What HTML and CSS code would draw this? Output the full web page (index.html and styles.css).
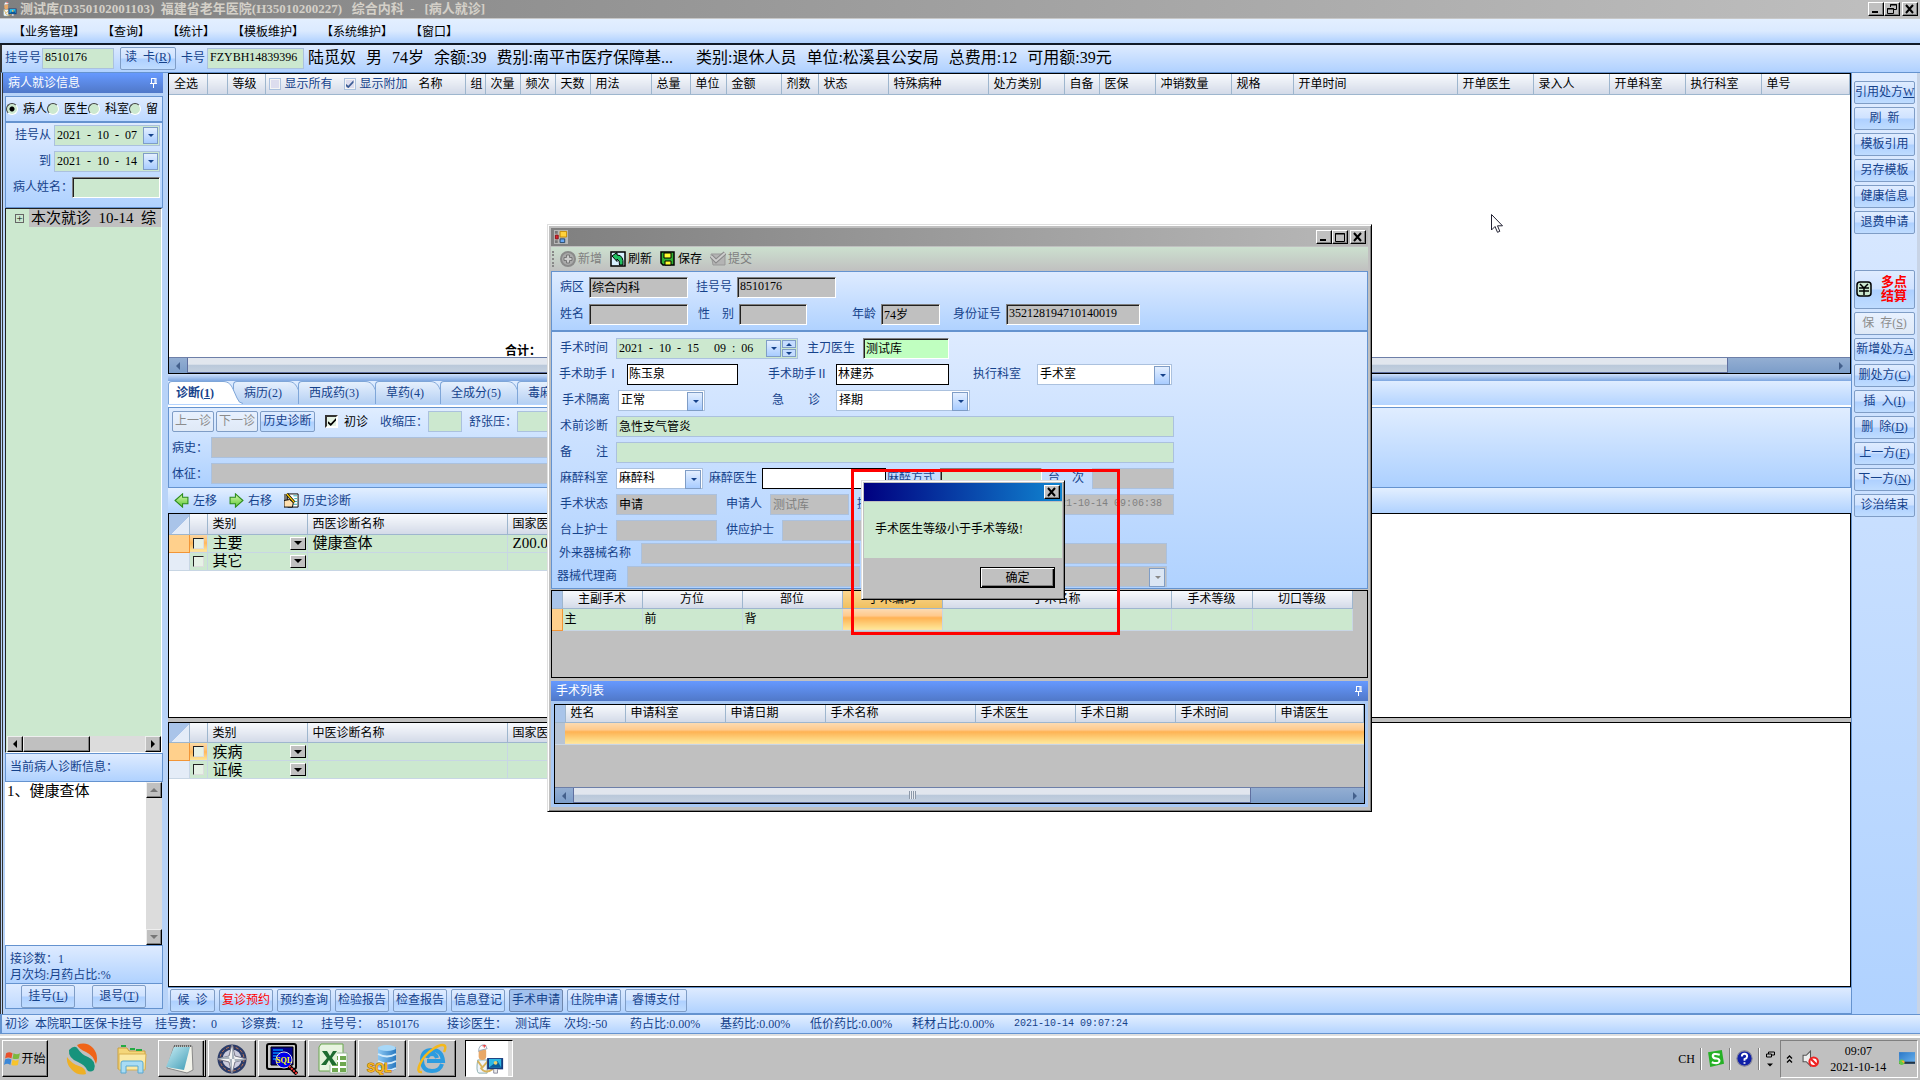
FILE: index.html
```html
<!DOCTYPE html>
<html lang="zh-CN">
<head>
  <meta charset="UTF-8">
  <meta name="viewport" content="width=device-width, initial-scale=1.0">
  <title>病人就诊</title>
  <link rel="stylesheet" href="styles.css">
</head>
<body>
  <svg class="defs" aria-hidden="true">
    <defs>
      <linearGradient id="tabFill" x1="0" y1="0" x2="0" y2="1"><stop offset="0" stop-color="#e6f0fd"/><stop offset="1" stop-color="#b5d0f3"/></linearGradient>
      <linearGradient id="arrowFill" x1="0" y1="0" x2="0" y2="1"><stop offset="0" stop-color="#d8f8b0"/><stop offset="1" stop-color="#5cc832"/></linearGradient>
      <linearGradient id="deskFill" x1="0" y1="0" x2="1" y2="1"><stop offset="0" stop-color="#2a78c8"/><stop offset="1" stop-color="#6db4ee"/></linearGradient>
      <linearGradient id="padFill" x1="0" y1="0" x2="1" y2="1"><stop offset="0" stop-color="#c9eef5"/><stop offset="1" stop-color="#3f9bb5"/></linearGradient>
      <linearGradient id="dbFill" x1="0" y1="0" x2="1" y2="0"><stop offset="0" stop-color="#8cc8f4"/><stop offset="1" stop-color="#2878c0"/></linearGradient>
    </defs>
    <symbol id="pin" viewBox="0 0 9 12"><path d="M2.5 1v5M1 6.500h7M6 1v5M7 1v5M2.500 1.500h4M4.500 7v4" stroke="#fff" fill="none"/></symbol>
    <symbol id="doctor" viewBox="0 0 32 34">
      <path d="M4 18Q2 30 5 32H14V18Z" fill="#eef4fb" stroke="#8aa"/><rect x="5" y="5" width="8" height="13" rx="4" fill="#e8a868"/><path d="M5 9Q5 1 12 2L14 6 6 8Z" fill="#fff" stroke="#9ab"/><path d="M9 3h4M11 2v3" stroke="#e33"/><path d="M4 19L9 26 15 19M7 26Q12 34 21 27T25 20" fill="none" stroke="#d8b35c" stroke-width="2"/>
      <rect x="14" y="16" width="17" height="12" fill="#173a7c"/><rect x="16" y="17" width="13" height="9" fill="#2cb7e4"/><path d="M16 26L25 19 29 26Z" fill="#0a5d9c"/><circle cx="23" cy="21" r="2" fill="#e9cf6d"/><path d="M21 28v4h4v-4" stroke="#889" fill="#eee"/>
    </symbol>
    <symbol id="win-min" viewBox="0 0 12 10"><path d="M2 8h6" stroke="#000" stroke-width="2"/></symbol>
    <symbol id="win-max" viewBox="0 0 12 10"><path d="M1.500 1.500h9v8h-9zM1 2h10" stroke="#000" fill="none"/></symbol>
    <symbol id="win-restore" viewBox="0 0 12 10"><path d="M4.500 3V.5h6v5H8M4 1h7M1.500 4.500h6v5h-6zM1 5h7" stroke="#000" fill="none"/></symbol>
    <symbol id="win-close" viewBox="0 0 12 10"><path d="M2 1L9 9M9 1L2 9" stroke="#000" stroke-width="2"/></symbol>
    <symbol id="left" viewBox="0 0 14 14"><path d="M1 7L8 .8V4H13V10H8V13.200Z" fill="url(#arrowFill)" stroke="#2c8c1c"/></symbol>
    <symbol id="right" viewBox="0 0 14 14"><path d="M13 7L6 .8V4H1V10H6V13.200Z" fill="url(#arrowFill)" stroke="#2c8c1c"/></symbol>
    <symbol id="cap" viewBox="0 0 20 23"><path class="cap-fill" d="M0 .5C6 .5 8 4 10 8L14 17Q16 22.500 20 22.500V23H0Z"/><path d="M0 .5C6 .5 8 4 10 8L14 17Q16 22.500 20 22.500" fill="none" stroke="#7fa6d8"/></symbol>
  </svg>

  <header class="titlebar">
    <svg class="app-icon"><use href="#doctor"/></svg>
    <h1>测试库(D350102001103)&nbsp; 福建省老年医院(H35010200227)&nbsp;&nbsp; 综合内科&nbsp; -&nbsp;&nbsp; [病人就诊]</h1>
    <div class="win-buttons">
      <button aria-label="最小化"><svg><use href="#win-min"/></svg></button><button aria-label="还原"><svg><use href="#win-restore"/></svg></button><button aria-label="关闭"><svg><use href="#win-close"/></svg></button>
    </div>
  </header>

  <nav class="menu">
    <a href="#">【业务管理】</a><a href="#">【查询】</a><a href="#">【统计】</a><a href="#">【模板维护】</a><a href="#">【系统维护】</a><a href="#">【窗口】</a>
  </nav>

  <section class="patient-bar">
    <label for="regNo">挂号号</label>
    <input id="regNo" class="reg" value="8510176">
    <button class="btn">读&nbsp; 卡(<u>R</u>)</button>
    <label for="cardNo">卡号</label>
    <input id="cardNo" class="card" value="FZYBH14839396">
    <div class="patient">
      <span>陆觅奴</span><span>男</span><span>74岁</span><span>余额:39</span><span class="fee">费别:南平市医疗保障基...</span><span>类别:退休人员</span><span>单位:松溪县公安局</span><span>总费用:12</span><span>可用额:39元</span>
    </div>
  </section>

  <main class="workspace">
    <aside class="left">
      <h2 class="blue-title">病人就诊信息<svg class="pin"><use href="#pin"/></svg></h2>
      <div class="radios">
        <label><input type="radio" name="scope" checked>病人</label><label><input type="radio" name="scope">医生</label><label><input type="radio" name="scope">科室</label><label><input type="radio" name="scope">留</label>
      </div>
      <div class="search">
        <label for="from">挂号从</label>
        <div class="date"><input id="from" value="2021&nbsp; -&nbsp; 10&nbsp; -&nbsp; 07"><button class="drop" aria-label="选择"></button></div>
        <label for="to">到</label>
        <div class="date"><input id="to" value="2021&nbsp; -&nbsp; 10&nbsp; -&nbsp; 14"><button class="drop" aria-label="选择"></button></div>
        <label for="pname">病人姓名：</label>
        <input id="pname" class="sunken">
      </div>
      <div class="tree">
        <div class="tree-item"><button class="plus" aria-label="展开">+</button><span>本次就诊&nbsp; 10-14&nbsp; 综</span></div>
        <div class="hscroll classic">
          <button aria-label="左"><i class="tri l"></i></button><div class="thumb"></div><button class="end" aria-label="右"><i class="tri r"></i></button>
        </div>
      </div>
      <h3 class="section">当前病人诊断信息：</h3>
      <div class="diag-list">
        <p>1、健康查体</p>
        <div class="vscroll classic"><button aria-label="上"><i class="tri u"></i></button><button aria-label="下"><i class="tri d"></i></button></div>
      </div>
      <div class="stats"><p>接诊数：1</p><p>月次均:月药占比:%</p></div>
      <div class="reg-buttons"><button class="btn">挂号(<u>L</u>)</button><button class="btn">退号(<u>T</u>)</button></div>
    </aside>

    <section class="center">
      <div class="orders">
        <table>
          <colgroup><col class="w38"><col class="w20"><col class="w38"><col class="w200"><col class="w20"><col class="w35"><col class="w35"><col class="w35"><col class="w61"><col class="w39"><col class="w36"><col class="w55"><col class="w37"><col class="w70"><col class="w100"><col class="w76"><col class="w35"><col class="w56"><col class="w76"><col class="w62"><col class="w164"><col class="w76"><col class="w76"><col class="w76"><col class="w76"><col></colgroup>
          <thead><tr>
            <th>全选</th><th></th><th>等级</th>
            <th class="name-col"><div class="toggles"><label><input type="checkbox">显示所有</label><label><input type="checkbox" checked>显示附加</label><span>名称</span></div></th>
            <th>组</th><th>次量</th><th>频次</th><th>天数</th><th>用法</th><th>总量</th><th>单位</th><th>金额</th><th>剂数</th><th>状态</th><th>特殊病种</th><th>处方类别</th><th>自备</th><th>医保</th><th>冲销数量</th><th>规格</th><th>开单时间</th><th>开单医生</th><th>录入人</th><th>开单科室</th><th>执行科室</th><th>单号</th>
          </tr></thead>
        </table>
        <p class="total">合计：</p>
        <div class="hscroll flat"><button aria-label="左"><i class="tri l"></i></button><div class="thumb"></div><button class="end" aria-label="右"><i class="tri r"></i></button></div>
      </div>
      <div class="splitter"></div>
      <div class="tabs">
        <button class="tab active">诊断(<u>1</u>)<svg class="cap"><use href="#cap"/></svg></button><button class="tab">病历(2)<svg class="cap"><use href="#cap"/></svg></button><button class="tab long">西成药(3)<svg class="cap"><use href="#cap"/></svg></button><button class="tab">草药(4)<svg class="cap"><use href="#cap"/></svg></button><button class="tab long">全成分(5)<svg class="cap"><use href="#cap"/></svg></button><button class="tab long">毒麻<svg class="cap"><use href="#cap"/></svg></button>
      </div>
      <div class="vitals">
        <div class="vitals-top">
          <button class="btn" disabled>上一诊</button><button class="btn" disabled>下一诊</button><button class="btn hist">历史诊断</button>
          <label class="first"><input type="checkbox" class="classic-check" checked>初诊</label>
          <label for="sbp">收缩压：</label><input id="sbp" class="bp">
          <label for="dbp">舒张压：</label><input id="dbp" class="bp">
        </div>
        <div class="vitals-row"><label for="history">病史：</label><input id="history" disabled></div>
        <div class="vitals-row"><label for="signs">体征：</label><input id="signs" disabled></div>
      </div>
      <div class="diag-tools">
        <button><svg><use href="#left"/></svg>左移</button>
        <button><svg><use href="#right"/></svg>右移</button>
        <button><svg viewBox="0 0 16 16"><path d="M0 1h15v14H0z" fill="#777"/><path d="M4 1h11v14H4z" fill="#fff" stroke="#000"/><path d="M10 3h4M11 6h3M11 9h3M10 12h4" stroke="#2aa"/><path d="M0 8l6-1 4 3-1 5H0z" fill="#ffe0b0" stroke="#000"/><path d="M3 1l8 9" stroke="#000" stroke-width="3"/><path d="M3 1l8 9" stroke="#fc0" stroke-width="1.500"/></svg>历史诊断</button>
      </div>
      <div class="grid-box west">
        <table class="diag">
          <colgroup><col class="w20"><col class="w18"><col class="w100"><col class="w200"><col></colgroup>
          <thead><tr><th class="corner"></th><th></th><th>类别</th><th>西医诊断名称</th><th>国家医</th></tr></thead>
          <tbody>
            <tr class="current"><td></td><td><input type="checkbox" aria-label="选择主要"></td><td><div class="pick">主要<button aria-label="选择"><i class="tri d"></i></button></div></td><td>健康查体</td><td>Z00.0</td></tr>
            <tr><td></td><td><input type="checkbox" aria-label="选择其它"></td><td><div class="pick">其它<button aria-label="选择"><i class="tri d"></i></button></div></td><td></td><td></td></tr>
          </tbody>
        </table>
      </div>
      <div class="grey-split"></div>
      <div class="grid-box tcm">
        <table class="diag">
          <colgroup><col class="w20"><col class="w18"><col class="w100"><col class="w200"><col></colgroup>
          <thead><tr><th class="corner"></th><th></th><th>类别</th><th>中医诊断名称</th><th>国家医</th></tr></thead>
          <tbody>
            <tr class="current"><td></td><td><input type="checkbox" aria-label="选择疾病"></td><td><div class="pick">疾病<button aria-label="选择"><i class="tri d"></i></button></div></td><td></td><td></td></tr>
            <tr><td></td><td><input type="checkbox" aria-label="选择证候"></td><td><div class="pick">证候<button aria-label="选择"><i class="tri d"></i></button></div></td><td></td><td></td></tr>
          </tbody>
        </table>
      </div>
      <div class="bottom-buttons">
        <button class="btn wait">候&nbsp; 诊</button><button class="btn red">复诊预约</button><button class="btn">预约查询</button><button class="btn">检验报告</button><button class="btn">检查报告</button><button class="btn">信息登记</button><button class="btn pressed">手术申请</button><button class="btn">住院申请</button><button class="btn pay">睿博支付</button>
      </div>
    </section>

    <aside class="right">
      <button class="btn">引用处方<u>W</u></button>
      <button class="btn">刷&nbsp; 新</button>
      <button class="btn">模板引用</button>
      <button class="btn">另存模板</button>
      <button class="btn">健康信息</button>
      <button class="btn">退费申请</button>
      <button class="btn settle"><svg viewBox="0 0 16 16"><rect x="1" y="1" width="14" height="14" rx="3" fill="#cce8cf" stroke="#000" stroke-width="1.500"/><path d="M4 3l4 4 4-4M3 7h10M3 10h10M8 7v7" stroke="#000" stroke-width="1.500" fill="none"/></svg><b>多点<br>结算</b></button>
      <button class="btn" disabled>保&nbsp; 存(<u>S</u>)</button>
      <button class="btn">新增处方<u>A</u></button>
      <button class="btn">删处方(<u>C</u>)</button>
      <button class="btn">插&nbsp; 入(<u>I</u>)</button>
      <button class="btn">删&nbsp; 除(<u>D</u>)</button>
      <button class="btn">上一方(<u>F</u>)</button>
      <button class="btn">下一方(<u>N</u>)</button>
      <button class="btn">诊治结束</button>
    </aside>
  </main>

  <footer class="status">
    <span class="s30">初诊</span><span class="s120">本院职工医保卡挂号</span><span class="s56">挂号费：</span><span class="s30">0</span><span class="s50">诊察费:</span><span class="s30">12</span><span class="s56">挂号号：</span><span class="s70">8510176</span><span class="s68">接诊医生：</span><span class="s49">测试库</span><span class="s66">次均:-50</span><span class="s90">药占比:0.00%</span><span class="s90">基药比:0.00%</span><span class="s102">低价药比:0.00%</span><span class="s102">耗材占比:0.00%</span><span class="mono">2021-10-14 09:07:24</span>
  </footer>

  <section class="window">
    <div class="window-title">
      <svg class="form-icon" viewBox="0 0 15 15"><path d="M0 0h15v15H0z" fill="#b8b8b8"/><path d="M1 1h3v3H1zM1 11h3v3H1z" fill="#777"/><path d="M6.500 1.500h7v6h-7z" fill="#ffd23c" stroke="#c68a00"/><path d="M1.500 5.500h3v4h-3z" fill="#d23" stroke="#811"/><path d="M6.500 9.500h5v4h-5z" fill="#68a8f4" stroke="#246"/></svg>
      <div class="win-buttons"><button aria-label="最小化"><svg><use href="#win-min"/></svg></button><button aria-label="最大化"><svg><use href="#win-max"/></svg></button><button aria-label="关闭"><svg><use href="#win-close"/></svg></button></div>
    </div>
    <div class="window-tools">
      <i class="grip"></i>
      <button disabled><svg viewBox="0 0 16 16"><circle cx="8" cy="8" r="7" fill="#aaa" stroke="#8a8a8a" stroke-width="2"/><path d="M6.500 4h3v2.500H12v3H9.500V12h-3V9.500H4v-3h2.500z" fill="#ccc" stroke="#777"/></svg>新增</button>
      <button><svg viewBox="0 0 16 16"><path d="M1 1h14v14H1z" fill="#d8f0ff" stroke="#000" stroke-width="1.500"/><path d="M2 5L7 1.500V4Q14 4 13 14H9.500Q10 9 7 8V10.500Z" fill="#1fc060" stroke="#000"/></svg>刷新</button>
      <button><svg viewBox="0 0 16 16"><path d="M1 1h13v13H3L1 12z" fill="#30b030" stroke="#000" stroke-width="1.500"/><path d="M4 2h7v5H4zM5 10h6v4H5z" fill="#ffff30" stroke="#000"/></svg>保存</button>
      <button disabled><svg viewBox="0 0 16 16"><path d="M1 3h14v11H3z" fill="#b4b4b4" stroke="#999"/><path d="M1 5l5 5 9-8" stroke="#888" stroke-width="4" fill="none"/><path d="M1 5l5 5 9-8" stroke="#ccc" stroke-width="2" fill="none"/></svg>提交</button>
    </div>

    <form class="who">
      <div class="row who-a">
        <label for="ward">病区</label><input id="ward" class="sunken grey" value="综合内科">
        <label for="rno">挂号号</label><input id="rno" class="sunken grey" value="8510176">
      </div>
      <div class="row who-b">
        <label for="nm">姓名</label><input id="nm" class="sunken grey">
        <label for="sex">性　别</label><input id="sex" class="sunken grey">
        <label for="age">年龄</label><input id="age" class="sunken grey" value="74岁">
        <label for="idno">身份证号</label><input id="idno" class="sunken grey" value="352128194710140019">
      </div>
    </form>

    <form class="surgery">
      <div class="row r-time">
        <label for="stime">手术时间</label>
        <div class="date"><input id="stime" value="2021&nbsp; -&nbsp; 10&nbsp; -&nbsp; 15&nbsp; &nbsp; &nbsp;09&nbsp; :&nbsp; 06"><button type="button" class="drop" aria-label="选择"></button><div class="spin"><button type="button" aria-label="加"><i class="tri u"></i></button><button type="button" aria-label="减"><i class="tri d"></i></button></div></div>
        <label for="surgeon">主刀医生</label><input id="surgeon" class="sunken lime" value="测试库">
      </div>
      <div class="row r-assist">
        <label for="a1">手术助手Ⅰ</label><input id="a1" class="plain" value="陈玉泉">
        <label for="a2">手术助手Ⅱ</label><input id="a2" class="plain" value="林建苏">
        <label for="dept" class="wide">执行科室</label><div class="select"><select id="dept"><option>手术室</option></select></div>
      </div>
      <div class="row r-iso">
        <label for="iso">手术隔离</label><div class="select"><select id="iso"><option>正常</option></select></div>
        <label for="urg" class="wide">急　　诊</label><div class="select"><select id="urg"><option>择期</option></select></div>
      </div>
      <div class="row r-full"><label for="pre">术前诊断</label><input id="pre" class="flatin" value="急性支气管炎"></div>
      <div class="row r-full"><label for="memo">备　　注</label><input id="memo" class="flatin"></div>
      <div class="row r-anes">
        <label for="an1">麻醉科室</label><div class="select"><select id="an1"><option>麻醉科</option></select></div>
        <label for="an2" class="snug">麻醉医生</label><input id="an2" class="plain">
        <label for="an3" class="snug">麻醉方式</label><input id="an3" class="sunken green">
        <label for="seq">台　次</label><input id="seq" disabled>
      </div>
      <div class="row r-state">
        <label for="st">手术状态</label><input id="st" class="flatin grey" value="申请">
        <label for="ap">申请人</label><input id="ap" disabled value="测试库">
        <label for="at" class="from-left">提交时间</label><input id="at" class="mono" disabled value="2021-10-14 09:06:38">
      </div>
      <div class="row r-nurse">
        <label for="n1">台上护士</label><input id="n1" disabled>
        <label for="n2">供应护士</label><input id="n2" disabled>
      </div>
      <div class="tight">
        <div class="row r-ext"><label for="e1">外来器械名称</label><input id="e1" disabled><input aria-label="器械" disabled></div>
        <div class="row r-agent"><label for="e2">器械代理商</label><input id="e2" disabled><div class="select off"><select aria-label="代理商" disabled><option></option></select></div></div>
      </div>
    </form>

    <div class="op-box">
      <table class="op">
        <colgroup><col class="w10"><col class="w80"><col class="w100"><col class="w100"><col class="w100"><col class="w229"><col class="w81"><col class="w100"></colgroup>
        <thead><tr><th class="sel"></th><th>主副手术</th><th>方位</th><th>部位</th><th class="hot">手术编码</th><th>手术名称</th><th>手术等级</th><th>切口等级</th></tr></thead>
        <tbody><tr><td class="sel"></td><td>主</td><td>前</td><td>背</td><td class="orange"></td><td></td><td></td><td></td></tr></tbody>
      </table>
    </div>
    <h2 class="blue-title">手术列表<svg class="pin"><use href="#pin"/></svg></h2>
    <div class="list-box">
      <table class="list">
        <colgroup><col class="w10"><col class="w60"><col class="w100"><col class="w100"><col class="w150"><col class="w100"><col class="w100"><col class="w100"><col></colgroup>
        <thead><tr><th class="sel"></th><th>姓名</th><th>申请科室</th><th>申请日期</th><th>手术名称</th><th>手术医生</th><th>手术日期</th><th>手术时间</th><th>申请医生</th></tr></thead>
        <tbody><tr><td class="sel"></td><td></td><td></td><td></td><td></td><td></td><td></td><td></td><td></td></tr></tbody>
      </table>
      <div class="hscroll flat"><button aria-label="左"><i class="tri l"></i></button><div class="thumb"><i></i></div><button class="end" aria-label="右"><i class="tri r"></i></button></div>
    </div>
  </section>

  <div class="mark"></div>

  <section class="alert" role="alertdialog">
    <div class="alert-title"><div class="win-buttons"><button aria-label="关闭"><svg><use href="#win-close"/></svg></button></div></div>
    <p>手术医生等级小于手术等级!</p>
    <div class="alert-foot"><button class="ok">确定</button></div>
  </section>

  <svg class="cursor" viewBox="0 0 12 19"><path d="M.5 .5V16L4 12.500 6.500 18.300 8.800 17.300 6.500 11.800H11.500Z" fill="#fff" stroke="#223"/></svg>

  <footer class="taskbar">
    <button class="start"><svg viewBox="0 0 16 16"><path d="M2 3Q5 1 8 3L7 8Q4 6 1 8Z" fill="#e8502c"/><path d="M9 3Q12 5 15 3L14 8Q11 9 8 8Z" fill="#7cb83c"/><path d="M1 9Q4 7 7 9L6 14Q3 12 0 14Z" fill="#3c88d8"/><path d="M8 9Q11 11 14 9L13 14Q10 15 7 14Z" fill="#f8c42c"/></svg>开始</button>
    <div class="quick">
      <svg viewBox="0 0 32 32"><path d="M11 2Q20-2 27 5 33 12 30 21 27 12 20 9 13 6 11 2Z" fill="#f06418"/><path d="M3 7Q9 1 12 6 15 11 22 14 31 18 28 27 24 30 21 27 19 22 12 19 2 15 3 7Z" fill="#16937c"/><path d="M1 14Q6 21 13 23 20 25 20 31 12 33 6 27 0 21 1 14Z" fill="#eeb026"/></svg>
      <svg viewBox="0 0 32 32"><path d="M2 5h9l2 3h16v18H2z" fill="#f4d67a" stroke="#c9a040"/><path d="M5 3h5M14 6h5M20 7h6" stroke="#2a4" stroke-width="2"/><path d="M3 11h27l-1 16H3z" fill="#fbe9a4" stroke="#d8b050"/><path d="M5 30V20Q5 18 7 18H25Q27 18 27 20V30H22V23H10V30Z" fill="#a8dcf4" stroke="#58a8d0"/></svg>
    </div>
    <div class="tasks">
      <button class="stack" aria-label="记事本"><svg viewBox="0 0 32 32"><path d="M9 3H27L28 27 22 30 2 25Z" fill="#f3f3ea" stroke="#888"/><path d="M9 4H25L19 27 1 24Z" fill="url(#padFill)"/><path d="M9 3h18" stroke="#666" stroke-width="2" stroke-dasharray="1 1"/></svg></button>
      <button aria-label="导航"><svg viewBox="0 0 32 32"><circle cx="16" cy="16" r="12" fill="#ccd" stroke="#2c3c68" stroke-width="5"/><circle cx="16" cy="16" r="12" fill="none" stroke="#c87850" stroke-width="1" stroke-dasharray="3 2"/><path d="M16 1L19 13 31 16 19 19 16 31 13 19 1 16 13 13Z" fill="#f4f4f4" stroke="#778"/><path d="M16 1V16H31L19 19ZM16 31V16H1L13 13Z" fill="#a9b2bd"/></svg></button>
      <button aria-label="SQL"><svg viewBox="0 0 32 32"><rect x="1" y="1" width="29" height="25" rx="2" fill="#c8c8c8" stroke="#000" stroke-width="2"/><path d="M5 4h22v18H5z" fill="#00008c" stroke="#000"/><path d="M7 7h10M7 10h7M7 13h6M7 16h5" stroke="#08f" stroke-width="1.500"/><circle cx="18" cy="17" r="8" fill="#00e" stroke="#ddd"/><text x="18" y="20" text-anchor="middle" class="lens">SQL</text><path d="M23 23l8 8" stroke="#000" stroke-width="4"/><path d="M23 23l8 8" stroke="#f33" stroke-width="2" stroke-dasharray="2 1"/></svg></button>
      <button aria-label="Excel"><svg viewBox="0 0 32 32"><path d="M5 1h22v27H3V4z" fill="#e8f4e0" stroke="#6aa84f"/><path d="M14 10h17v20H14z" fill="#fff" stroke="#9b9"/><path d="M16 13h6v4h-6zM24 13h6v4h-6zM16 19h6v4h-6zM24 19h6v4h-6zM16 25h6v4h-6zM24 25h6v4h-6z" fill="#6fa850"/><path d="M4 7h17v15H4z" fill="#e4f2da"/><path d="M6 8h5l3 5 3-5h4l-5 7 5 7h-5l-3-5-3 5H5l6-7z" fill="#1e6b30"/></svg></button>
      <button aria-label="SQL数据库"><svg viewBox="0 0 32 32"><path d="M12 4V26Q21 32 30 26V4Z" fill="url(#dbFill)"/><ellipse cx="21" cy="5" rx="9" ry="3" fill="#a8d8f8"/><path d="M12 11Q21 16 30 11M12 18Q21 23 30 18M12 25Q21 30 30 25" stroke="#d4ecfc" stroke-width="2" fill="none"/><text x="1" y="29" class="gold">SQL</text></svg></button>
      <button aria-label="浏览器"><svg viewBox="0 0 32 32"><path d="M26 21Q24 28 16 28 6 28 6 17 6 7 16 7 26 7 27 18H11M11 15Q12 11 16 11 20 11 21 15" fill="none" stroke="#2c9ce0" stroke-width="4"/><path d="M6 29Q0 30 4 21 8 12 17 6 26 0 29 3 30 5 28 9" fill="none" stroke="#f4b81c" stroke-width="2.500"/></svg></button>
      <button class="on" aria-label="病人就诊"><svg><use href="#doctor"/></svg></button>
    </div>
    <div class="tray">
      <span class="lang">CH</span><i class="sep"></i>
      <svg viewBox="0 0 16 16"><path d="M1 2L14 0 16 13 3 16Z" fill="#25b025"/><path d="M12 4.500Q5 2.500 5.500 6 6 8 9 8 12.500 8.500 11.500 11 10 13.500 4.500 11.500" fill="none" stroke="#fff" stroke-width="2"/></svg><i class="sep"></i>
      <svg viewBox="0 0 16 16"><circle cx="8" cy="8" r="7.200" fill="#1020a8" stroke="#889"/><path d="M5.500 6Q5.500 3.500 8 3.500 10.500 3.500 10.500 6 10.500 7.500 8 8.500V10M8 11.500v1.500" stroke="#fff" stroke-width="1.800" fill="none"/></svg><i class="sep"></i>
      <svg class="restore" viewBox="0 0 10 16"><path d="M3.500 3.500V1.500h6v3H7M1.500 3.500h5v3h-5z" stroke="#000" fill="none"/><path d="M2 13h6l-3 3z"/></svg>
      <div class="clock-box">
        <svg class="chev" viewBox="0 0 7 10"><path d="M1 4.500L3.500 2 6 4.500M1 8.500L3.500 6 6 8.500" stroke="#000" stroke-width="1.300" fill="none"/></svg>
        <svg viewBox="0 0 16 16"><path d="M1 5h3l4-4v14l-4-4H1z" fill="#eee" stroke="#555"/><circle cx="11" cy="11" r="4" fill="#fff" stroke="#e22" stroke-width="2"/><path d="M8 8l6 6" stroke="#e22" stroke-width="2"/></svg>
        <div class="clock"><span>09:07</span><span>2021-10-14</span></div>
        <svg viewBox="0 0 16 16"><rect x="1" y="2" width="15" height="11" fill="url(#deskFill)"/><path d="M1 11h15v2H1z" fill="#234"/><circle cx="3.500" cy="11.500" r="2.500" fill="#6c4"/><path d="M3 10h3v3z" fill="#fa3"/></svg>
      </div>
    </div>
  </footer>
</body>
</html>
```
FILE: styles.css
```css
* {
  margin: 0;
  padding: 0;
  box-sizing: border-box;
}

body {
  font: 12px/14px "Liberation Serif", "Noto Sans CJK SC", serif;
  color: #000;
  background: #b8d3f8;
  height: 100vh;
  min-height: 900px;
  display: flex;
  flex-direction: column;
  position: relative;
  overflow: hidden;
}

button, input, select {
  font: inherit;
  color: inherit;
  border-radius: 0;
  min-width: 0;
}

button {
  border: none;
  background: none;
  white-space: nowrap;
}

label {
  white-space: nowrap;
}

table {
  border-collapse: collapse;
  table-layout: fixed;
  width: 100%;
}

i {
  display: block;
  font-style: normal;
}

.defs {
  position: absolute;
  width: 0;
  height: 0;
}

/* column widths */
.w10 { width: 10px; }
.w18 { width: 18px; }
.w20 { width: 20px; }
.w35 { width: 35px; }
.w36 { width: 36px; }
.w37 { width: 37px; }
.w38 { width: 38px; }
.w39 { width: 39px; }
.w55 { width: 55px; }
.w56 { width: 56px; }
.w60 { width: 60px; }
.w61 { width: 61px; }
.w62 { width: 62px; }
.w70 { width: 70px; }
.w76 { width: 76px; }
.w80 { width: 80px; }
.w81 { width: 81px; }
.w100 { width: 100px; }
.w150 { width: 150px; }
.w164 { width: 164px; }
.w200 { width: 200px; }
.w229 { width: 229px; }

/* title bar and menu */
.titlebar {
  height: 19px;
  flex: none;
  display: flex;
  align-items: center;
  gap: 3px;
  padding: 0 2px;
  background: linear-gradient(90deg, #808080, #c0c0c0);
  border-bottom: 1px solid #c8c8c8;
}

.titlebar h1 {
  font-size: 13px;
  line-height: 18px;
  color: #d4d0c8;
  flex: 1;
}

.app-icon {
  width: 15px;
  height: 16px;
}

.win-buttons {
  display: flex;
  margin-left: auto;
}

.win-buttons button {
  width: 16px;
  height: 14px;
  background: #c0c0c0;
  border: 1px solid;
  border-color: #fff #000 #000 #fff;
  box-shadow: inset -1px -1px #808080;
  display: flex;
  align-items: center;
  justify-content: center;
}

.win-buttons button:nth-child(3) {
  margin-left: 2px;
}

.win-buttons svg {
  width: 12px;
  height: 10px;
}

.menu {
  height: 26px;
  flex: none;
  display: flex;
  gap: 17px;
  padding: 6px 13px 4px;
  background: linear-gradient(#e3efff, #dbeaff 50%, #aed0ff);
  border-bottom: 2px solid #111a28;
}

.menu a {
  color: #000;
  text-decoration: none;
  line-height: 14px;
}

.patient-bar {
  height: 28px;
  flex: none;
  display: flex;
  align-items: center;
  padding: 0 0 1px 3px;
  background: linear-gradient(#deebff, #b0d1ff);
  border-left: 2px solid #333;
  border-bottom: 1px solid #6593cf;
  color: #15428b;
}

.patient-bar label {
  width: 37px;
}

.patient-bar input {
  height: 21px;
  background: #cce8cf;
  border: 1px solid #abc1de;
  color: #000;
  padding: 0 0 2px 2px;
}

.patient-bar .reg {
  width: 72px;
  margin-right: 6px;
}

.patient-bar .btn {
  width: 56px;
  height: 23px;
  margin-right: 5px;
}

.patient-bar label[for="cardNo"] {
  width: 26px;
}

.patient-bar .card {
  width: 97px;
}

.patient {
  display: flex;
  gap: 10px;
  margin-left: 4px;
  font-size: 16px;
  line-height: 22px;
  color: #000;
  white-space: nowrap;
}

.fee {
  margin-right: 13px;
}

.btn {
  height: 23px;
  border: 1px solid #7f9dc6;
  border-radius: 2px;
  color: #15428b;
  background: linear-gradient(#dfecff, #cfe2ff 48%, #aed0ff 52%, #bfdcff);
  line-height: 18px;
  padding-bottom: 2px;
  text-align: center;
}

.btn:disabled {
  color: #8c8c8c;
  background: linear-gradient(#e8f1ff, #dfe9f6);
}

.btn.red {
  color: #f00;
}

.btn.pressed {
  background: #a3c2ee;
  border-color: #6e86ac;
}

.workspace {
  flex: 1;
  display: flex;
  min-height: 0;
  border-left: 3px double #333;
}

/* left column */
.left {
  width: 165px;
  flex: none;
  display: flex;
  flex-direction: column;
  padding-right: 5px;
}

.left > * {
  margin-left: 2px;
}

.blue-title {
  height: 20px;
  flex: none;
  background: linear-gradient(#6699ff, #5078c8);
  color: #fff;
  font-size: 12px;
  font-weight: normal;
  line-height: 19px;
  display: flex;
  align-items: center;
  justify-content: space-between;
  padding: 0 5px;
}

.left .blue-title {
  margin-left: 0;
}

.pin {
  width: 9px;
  height: 12px;
}

.radios {
  height: 26px;
  flex: none;
  margin-top: 3px;
  border: 1px solid #6593cf;
  background: linear-gradient(#deebff, #bcd8ff);
  display: flex;
  align-items: center;
  overflow: hidden;
}

.radios label {
  width: 41px;
  flex: none;
  display: flex;
  align-items: center;
  gap: 5px;
}

.radios label:last-child {
  width: auto;
}

.radios input {
  appearance: none;
  width: 12px;
  height: 12px;
  flex: none;
  border-radius: 50%;
  border: 1px solid;
  border-color: #404040 #fff #fff #404040;
  background: #cce8cf;
}

.radios input:checked {
  background: radial-gradient(circle, #000 2px, #cce8cf 3px);
}

.search {
  height: 86px;
  flex: none;
  border: 1px solid #6593cf;
  background: linear-gradient(#deebff, #b0d2ff);
  color: #15428b;
  display: grid;
  grid-template-columns: 48px 106px;
  grid-auto-rows: 21px;
  row-gap: 5px;
  padding: 2px 0;
}

.search > label {
  text-align: right;
  padding-right: 3px;
  line-height: 20px;
}

.search > label[for="pname"] {
  grid-column: 1 / 3;
  grid-row: 3;
  text-align: left;
  padding-left: 7px;
}

.search > .sunken {
  grid-column: 2;
  grid-row: 3;
  margin-left: 18px;
  background: #cce8cf;
}

.date {
  display: flex;
  align-items: center;
  background: #cce8cf;
  border: 1px solid #abc1de;
  height: 21px;
  padding-right: 1px;
}

.date input {
  flex: 1;
  background: none;
  border: none;
  color: #000;
  padding: 0 0 2px 2px;
}

.drop {
  width: 15px;
  height: 17px;
  flex: none;
  border: 1px solid #7f9dc6;
  background: linear-gradient(#e4efff, #a8ccff);
  display: flex;
  align-items: center;
  justify-content: center;
}

.drop::after {
  content: "";
  border: 3px solid transparent;
  border-top-color: #15428b;
  border-bottom: none;
}

.sunken {
  height: 21px;
  border: 1px solid;
  border-color: #808080 #fff #fff #808080;
  box-shadow: inset 1px 1px #202020;
  padding: 0 2px 2px;
  color: #000;
}

.tree {
  flex: 1;
  background: #cce8cf;
  border: 1px solid #202020;
  border-right-color: #fff;
  border-bottom: 1px solid #fff;
  display: flex;
  flex-direction: column;
  justify-content: space-between;
  padding-left: 1px;
  margin-right: 1px;
}

.tree-item {
  display: flex;
  align-items: center;
  font-size: 15px;
  white-space: nowrap;
  padding-left: 8px;
}

.tree-item span {
  flex: 1;
  background: #c0c0c0;
  line-height: 18px;
  padding-left: 2px;
  margin-left: 5px;
}

.plus {
  width: 9px;
  height: 9px;
  flex: none;
  border: 1px solid #666;
  font-size: 11px;
  line-height: 7px;
}

.hscroll {
  height: 16px;
  flex: none;
  display: flex;
}

.classic button {
  width: 16px;
  height: 16px;
  flex: none;
}

.classic button, .hscroll.classic .thumb {
  background: #c0c0c0;
  border: 1px solid;
  border-color: #eee #000 #000 #eee;
  box-shadow: inset -1px -1px #808080;
  display: flex;
  align-items: center;
  justify-content: center;
}

.classic {
  background: #dcdcdc;
}

.classic .thumb {
  width: 67px;
}

.hscroll .end {
  margin-left: auto;
}

.tri {
  border: 4px solid transparent;
  width: 0;
  height: 0;
}

.tri.l { border-right-color: currentColor; border-left: none; }
.tri.r { border-left-color: currentColor; border-right: none; }
.tri.u { border-bottom-color: currentColor; border-top: none; }
.tri.d { border-top-color: currentColor; border-bottom: none; }

.section {
  height: 29px;
  flex: none;
  border: 1px solid #6593cf;
  background: linear-gradient(#deebff, #b0d2ff);
  color: #15428b;
  font-size: 12px;
  font-weight: normal;
  line-height: 27px;
  padding-left: 4px;
}

.diag-list {
  height: 163px;
  flex: none;
  background: #fff;
  display: flex;
  justify-content: space-between;
  font-size: 15px;
  line-height: 18px;
  padding-left: 2px;
  margin-right: 1px;
}

.vscroll {
  display: flex;
  flex-direction: column;
  justify-content: space-between;
  color: #777;
}

.stats {
  height: 39px;
  flex: none;
  border: 1px solid #6593cf;
  background: linear-gradient(#deebff, #b0d2ff);
  color: #15428b;
  padding: 5px 4px;
  line-height: 16px;
}

.reg-buttons {
  height: 25px;
  flex: none;
  border: 1px solid #6593cf;
  border-top: none;
  background: linear-gradient(#deebff, #c0daff);
  display: flex;
  gap: 17px;
  padding: 1px 15px;
  margin-bottom: 5px;
}

.reg-buttons .btn {
  width: 54px;
}

/* centre column */
.center {
  flex: 1;
  min-width: 0;
  display: flex;
  flex-direction: column;
}

.orders {
  height: 301px;
  flex: none;
  background: #fff;
  border: 1px solid #000;
  display: flex;
  flex-direction: column;
}

th {
  height: 20px;
  background: linear-gradient(#f8fafd, #d3dae8);
  border-right: 1px solid #9eb6ce;
  border-bottom: 1px solid #9eb6ce;
  font-weight: normal;
  text-align: left;
  padding: 1px 0 0 5px;
  white-space: nowrap;
  overflow: hidden;
}

.orders .name-col {
  padding-left: 3px;
}

.toggles {
  display: flex;
  align-items: center;
}

.toggles label {
  display: flex;
  align-items: center;
  gap: 4px;
  width: 75px;
  color: #15428b;
}

.toggles input {
  appearance: none;
  width: 12px;
  height: 12px;
  border: 1px solid #abc1de;
  background: #dde;
  outline: 1px solid #f4f4f4;
  outline-offset: -2px;
}

.toggles input:checked::before, .classic-check:checked::before {
  content: "";
  display: block;
  width: 8px;
  height: 8px;
  margin: 1px;
  background: #3c5c94;
  clip-path: polygon(0 40%, 35% 70%, 100% 0, 100% 30%, 35% 100%, 0 70%);
}

.total {
  margin: auto 0 0 336px;
  font-weight: bold;
  line-height: 12px;
}

.flat {
  height: 16px;
  background: linear-gradient(#93aed2, #7c9dc9);
  border-top: 1px solid #6d7fa8;
}

.flat button {
  width: 18px;
  display: flex;
  align-items: center;
  justify-content: center;
  color: #44608c;
}

.flat .thumb {
  width: 1541px;
  max-width: 92%;
  background: linear-gradient(#e1e6ee 45%, #b9c8da 50%, #c4d0df);
  border: 1px solid #6070a0;
  border-top: none;
}

.splitter {
  height: 7px;
  flex: none;
  background: linear-gradient(#cfe1fc, #7ea6e0);
}

.tabs {
  height: 26px;
  flex: none;
  display: flex;
  align-items: flex-end;
  padding-bottom: 1px;
  background: linear-gradient(#e0edff, #b4d4ff);
  border-bottom: 2px solid #fff;
}

.tab {
  position: relative;
  width: 55px;
  height: 23px;
  margin-right: 10px;
  padding-left: 10px;
  text-align: left;
  color: #15428b;
  background: linear-gradient(#e6f0fd, #b5d0f3);
  border: 1px solid #7fa6d8;
  border-width: 1px 0 0 1px;
  border-radius: 4px 0 0;
  z-index: 1;
}

.tab.long {
  width: 67px;
}

.tab.active {
  background: #fff;
  font-weight: bold;
  padding-left: 7px;
  z-index: 2;
}

.cap {
  position: absolute;
  left: 100%;
  top: -1px;
  width: 20px;
  height: 23px;
  z-index: -1;
  fill: url(#tabFill);
}

.active .cap {
  fill: #fff;
}

.vitals {
  height: 81px;
  flex: none;
  border: 1px solid #6593cf;
  background: linear-gradient(#e0edff, #acd0ff);
  padding: 3px 3px 0;
  color: #15428b;
  display: flex;
  flex-direction: column;
  gap: 5px;
}

.vitals-top {
  display: flex;
  align-items: center;
  height: 21px;
}

.vitals-top .btn {
  width: 42px;
  height: 21px;
  margin-right: 2px;
}

.vitals-top .hist {
  width: 55px;
  margin-right: 10px;
}

.first {
  display: flex;
  align-items: center;
  gap: 6px;
  color: #000;
  margin-right: 12px;
}

.classic-check {
  appearance: none;
  width: 13px;
  height: 13px;
  background: #e4f2e4;
  border: 2px solid;
  border-color: #333 #fff #fff #333;
}

.classic-check:checked::before {
  background: #000;
}

.bp {
  width: 34px;
  height: 21px;
  border: 1px solid #abc1de;
  background: #cce8cf;
  margin-right: 7px;
}

.vitals-row {
  display: flex;
  align-items: center;
  height: 21px;
}

.vitals-row label {
  width: 39px;
}

input:disabled {
  background: #c0c0c0;
  border: 1px solid #abc1de;
  height: 21px;
  color: #808080;
}

.vitals-row input {
  width: 1000px;
}

.diag-tools {
  height: 25px;
  flex: none;
  display: flex;
  align-items: center;
  gap: 12px;
  padding-left: 6px;
  background: linear-gradient(#e3efff, #b0d2ff);
  color: #15428b;
}

.diag-tools button {
  display: flex;
  align-items: center;
  gap: 4px;
}

.diag-tools svg {
  width: 15px;
  height: 15px;
}

.grid-box {
  flex: 204 1 0;
  min-height: 0;
  background: #fff;
  border: 1px solid #000;
  overflow: hidden;
}

.grid-box.tcm {
  flex-grow: 265;
}

.grey-split {
  height: 4px;
  flex: none;
  background: #c0c0c0;
}

.diag {
  width: 538px;
}

.diag .corner {
  background: linear-gradient(135deg, #a9c4e9 55%, #e4ecf8 56%);
}

.diag td {
  height: 18px;
  background: #cce8cf;
  border-right: 1px solid #c8d6e4;
  border-bottom: 1px solid #c8d6e4;
  font-size: 15px;
  line-height: 16px;
  padding-left: 5px;
}

.diag td:first-child {
  background: #e4ecf7;
}

.diag .current td:first-child {
  background: #ffd08c;
  border-color: #f29536;
}

.diag .current td:nth-child(2) {
  background: linear-gradient(#fbd9a8, #ffb85c 50%, #fce99c);
}

.diag td:nth-child(2) {
  padding: 0 0 0 3px;
}

.diag input {
  display: block;
  appearance: none;
  width: 11px;
  height: 11px;
  background: #e6f2e6;
  border: 1px solid;
  border-color: #222 #ddd #ddd #222;
}

.pick {
  display: flex;
  justify-content: space-between;
  align-items: center;
  height: 16px;
  padding-right: 1px;
}

.pick button {
  width: 16px;
  height: 13px;
  background: #c0c0c0;
  border: 1px solid;
  border-color: #fff #000 #000 #fff;
  display: flex;
  align-items: center;
  justify-content: center;
}

.bottom-buttons {
  height: 27px;
  flex: none;
  display: flex;
  gap: 4px;
  padding: 1px 2px;
  border-top: 1px solid #6593cf;
  border-bottom: 1px solid #6593cf;
  background: linear-gradient(#deebff, #b0d2ff);
}

.bottom-buttons .btn {
  width: 54px;
}

.bottom-buttons .wait {
  width: 45px;
}

.bottom-buttons .pay {
  width: 62px;
}

/* right column */
.right {
  width: 69px;
  flex: none;
  border-left: 1px solid #6593cf;
  border-right: 3px solid #c8d4e6;
  background: linear-gradient(#deebff, #b0d2ff);
  padding: 8px 2px;
  display: flex;
  flex-direction: column;
  gap: 3px;
}

.right .btn {
  flex: none;
}

.right .settle {
  height: 39px;
  margin-top: 33px;
  display: flex;
  align-items: center;
  gap: 9px;
  padding-left: 1px;
}

.settle svg {
  width: 16px;
  height: 16px;
}

.settle b {
  font-size: 13px;
  line-height: 14px;
  color: #f00;
}

/* status bar */
.status {
  height: 20px;
  flex: none;
  display: flex;
  align-items: center;
  padding-left: 3px;
  background: linear-gradient(#e3efff, #b4d4ff);
  border: 2px solid #6593cf;
  border-width: 1px 0 1px 2px;
  color: #15428b;
  white-space: nowrap;
}

.s30 { width: 30px; }
.s49 { width: 49px; }
.s50 { width: 50px; }
.s56 { width: 56px; }
.s66 { width: 66px; }
.s68 { width: 68px; }
.s70 { width: 70px; }
.s90 { width: 90px; }
.s102 { width: 102px; }
.s120 { width: 120px; }

.mono {
  font-family: "Liberation Mono", monospace;
  font-size: 10px;
}

/* surgery request window */
.window {
  position: absolute;
  left: 547px;
  top: 224px;
  width: 825px;
  z-index: 5;
  padding: 3px;
  background: #c0c0c0;
  border: 1px solid;
  border-color: #dfdfdf #000 #000 #dfdfdf;
  box-shadow: inset 1px 1px #fff, inset -1px -1px #808080;
}

.window-title {
  height: 19px;
  display: flex;
  align-items: center;
  padding: 0 2px 0 3px;
  background: linear-gradient(90deg, #808080, #b8b8b8);
  border-bottom: 1px solid #c0c0c0;
}

.form-icon {
  width: 14px;
  height: 14px;
}

.window-tools {
  height: 24px;
  display: flex;
  align-items: center;
  gap: 8px;
  background: linear-gradient(#cce0cf, #c0c0c0);
}

.window-tools button {
  display: flex;
  align-items: center;
  gap: 2px;
}

.window-tools button:disabled {
  color: #808080;
}

.window-tools svg {
  width: 16px;
  height: 16px;
}

.grip {
  width: 3px;
  height: 16px;
  border-left: 2px dotted #888;
  margin-left: 1px;
  margin-right: -3px;
}

.who, .surgery {
  border: 1px solid #6593cf;
  color: #15428b;
  background: linear-gradient(#deebff, #b0d2ff);
}

.who {
  display: grid;
  gap: 6px;
  padding: 5px 0;
  border-bottom: none;
}

.surgery {
  display: grid;
  gap: 5px;
  padding: 6px 0 1px;
  border-top-width: 2px;
}

.row {
  display: grid;
  height: 21px;
  align-items: center;
}

.row > label {
  display: flex;
  justify-content: flex-end;
  padding: 0 8px 1px 0;
}

.who .row > label {
  padding-right: 5px;
}

.row > .wide {
  padding-right: 16px;
}

.row > .snug {
  padding-right: 5px;
}

.row > .from-left {
  justify-content: flex-start;
  padding-left: 8px;
}

.who-a { grid-template-columns: 37px 99px 49px 99px; }
.who-b { grid-template-columns: 37px 99px 51px 68px 74px 59px 66px 134px; }
.r-time { grid-template-columns: 64px 182px 65px 86px; }
.r-assist { grid-template-columns: 75px 111px 98px 113px 88px 135px; }
.r-iso { grid-template-columns: 66px 87px 131px 134px; }
.r-full { grid-template-columns: 64px 558px; }
.r-anes { grid-template-columns: 64px 87px 59px 124px 54px 102px 50px 82px; }
.r-state { grid-template-columns: 64px 101px 53px 79px 196px 129px; }
.r-nurse { grid-template-columns: 64px 101px 65px 140px; }
.r-ext { grid-template-columns: 84px 219px 302px; column-gap: 5px; }
.r-agent { grid-template-columns: 70px 233px 302px; column-gap: 5px; }

.r-ext > label, .r-agent > label {
  padding-right: 5px;
}

.tight {
  display: grid;
  gap: 2px;
  margin-top: -3px;
}

.grey {
  background: #c0c0c0;
}

.green {
  background: #cce8cf;
}

.lime {
  background: #c0ffc0;
}

.plain {
  height: 21px;
  background: #fff;
  border: 1px solid #000;
  color: #000;
  padding: 0 1px 3px;
}

.flatin {
  height: 21px;
  border: 1px solid #abc1de;
  background: #cce8cf;
  color: #000;
  padding: 0 2px 2px;
}

.flatin.grey {
  background: #c0c0c0;
}

.row input:disabled {
  padding: 0 2px 2px;
}

.select {
  position: relative;
  height: 21px;
}

.select select {
  appearance: none;
  width: 100%;
  height: 21px;
  border: 1px solid #abc1de;
  background: #fff;
  color: #000;
  padding: 0 18px 2px 2px;
}

.select::before {
  content: "";
  position: absolute;
  right: 2px;
  top: 2px;
  width: 14px;
  height: 17px;
  border: 1px solid #7f9dc6;
  background: linear-gradient(#e4efff, #a8ccff);
}

.select::after {
  content: "";
  position: absolute;
  right: 6px;
  top: 10px;
  border: 3px solid transparent;
  border-top-color: #15428b;
  border-bottom: none;
}

.select.off select {
  background: #c0c0c0;
  opacity: 1;
}

.select.off::before {
  background: #dbe6f4;
}

.select.off::after {
  border-top-color: #888;
}

.spin {
  width: 14px;
  display: flex;
  flex-direction: column;
  gap: 1px;
  margin-left: 1px;
}

.spin button {
  height: 8px;
  border: 1px solid #7f9dc6;
  background: #c4dcff;
  display: flex;
  align-items: center;
  justify-content: center;
}

.spin .tri {
  border-left-width: 3px;
  border-right-width: 3px;
}

.spin .u { border-bottom-width: 3px; }
.spin .d { border-top-width: 3px; }

.op-box {
  height: 88px;
  background: #c0c0c0;
  border: 1px solid #000;
  margin: 1px 0 3px;
}

.op {
  width: 800px;
}

.op th, .list th {
  height: 17px;
  line-height: 15px;
}

.op th {
  text-align: center;
  padding: 1px 0 0;
}

.op .hot {
  background: linear-gradient(#fbd690, #f0c060);
}

.op th.sel, .list th.sel {
  background: #a9c4e9;
}

.op td, .list td {
  height: 22px;
  background: #cce8cf;
  border-right: 1px solid #c8d6e4;
  border-bottom: 1px solid #c8d6e4;
  padding-left: 2px;
}

.op td.sel {
  background: #ffd08c;
  border-color: #f29536;
}

.op td.orange, .list td {
  background: linear-gradient(#fcdcb4, #ffc888 38%, #ffb050 42%, #fde89a);
}

.list-box {
  height: 100px;
  margin: 3px 3px 4px;
  background: #c0c0c0;
  border: 1px solid #000;
  display: flex;
  flex-direction: column;
  justify-content: space-between;
  box-shadow: 0 0 0 3px #a8c8f4;
}

.list td {
  border-right: none;
}

.list td.sel {
  background: #b8c4d4;
}

.window .thumb {
  width: 678px;
  display: flex;
  align-items: center;
  justify-content: center;
}

.thumb i {
  width: 7px;
  height: 8px;
  background: repeating-linear-gradient(90deg, #8c98a8 0 1px, #e8ecf2 1px 2px);
}

/* red highlight and message box */
.mark {
  position: absolute;
  left: 851px;
  top: 469px;
  width: 269px;
  height: 166px;
  border: 3px solid #f00;
  z-index: 6;
}

.alert {
  position: absolute;
  left: 861px;
  top: 480px;
  width: 204px;
  z-index: 7;
  padding: 2px;
  background: #c0c0c0;
  border: 1px solid;
  border-color: #dfdfdf #000 #000 #dfdfdf;
  box-shadow: inset 1px 1px #fff, inset -1px -1px #808080;
}

.alert-title {
  height: 18px;
  margin-bottom: 1px;
  display: flex;
  align-items: center;
  padding-right: 2px;
  background: linear-gradient(90deg, #000080, #1084d0);
}

.alert p {
  height: 56px;
  line-height: 55px;
  padding-left: 11px;
  background: #cce8cf;
}

.alert-foot {
  height: 39px;
  padding: 9px 7px;
  text-align: right;
}

.ok {
  width: 75px;
  height: 21px;
  background: #c0c0c0;
  border: 1px solid #000;
  box-shadow: inset 1px 1px #fff, inset -1px -1px #000, inset -2px -2px #808080;
}

.cursor {
  position: absolute;
  left: 1491px;
  top: 214px;
  width: 12px;
  height: 19px;
}

/* taskbar */
.taskbar {
  height: 46px;
  flex: none;
  background: #c0c0c0;
  border-top: 2px solid #dfdfdf;
  box-shadow: inset 0 2px #fff;
  display: flex;
  align-items: center;
  padding: 3px 2px 2px;
}

.start, .tasks button {
  height: 37px;
  background: #c0c0c0;
  border: 1px solid;
  border-color: #fff #000 #000 #fff;
  box-shadow: inset -1px -1px #808080;
  display: flex;
  align-items: center;
  justify-content: center;
}

.start {
  width: 46px;
}

.start svg {
  width: 17px;
  height: 17px;
}

.quick {
  display: flex;
  gap: 18px;
  margin: 0 10px 0 18px;
}

.quick svg, .tasks svg {
  width: 32px;
  height: 32px;
}

.tasks {
  display: flex;
  gap: 2px;
}

.tasks button {
  width: 48px;
}

.tasks .stack {
  border-right: 3px double #000;
}

.tasks .on {
  margin-left: 7px;
  background: #fff;
  border-color: #000 #fff #fff #000;
  box-shadow: inset -4px 0 #ddd;
}

.lens {
  font-size: 8px;
  font-weight: bold;
  fill: #ff0;
}

.gold {
  font: bold 12px "Liberation Sans", sans-serif;
  fill: #f8b820;
  stroke: #a86800;
  stroke-width: 1px;
  paint-order: stroke;
}

.tray {
  margin-left: auto;
  display: flex;
  align-items: center;
  gap: 5px;
}

.tray svg {
  width: 17px;
  height: 17px;
  flex: none;
}

.sep {
  width: 2px;
  height: 22px;
  border-left: 1px solid #808080;
  border-right: 1px solid #fff;
}

.tray .restore {
  width: 10px;
}

.clock-box {
  width: 138px;
  height: 38px;
  border: 1px solid;
  border-color: #808080 #fff #fff #808080;
  display: flex;
  align-items: center;
  justify-content: space-between;
  padding: 0 2px 0 5px;
}

.clock-box .chev {
  width: 7px;
  height: 10px;
}

.clock {
  display: flex;
  flex-direction: column;
  align-items: center;
  line-height: 16px;
  width: 62px;
}
```
